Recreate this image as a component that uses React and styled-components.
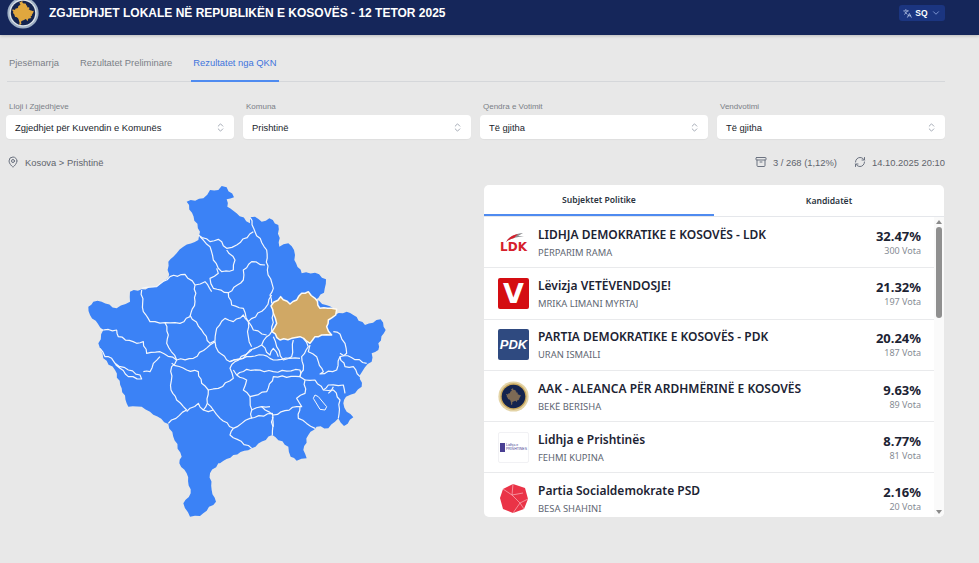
import styled, { createGlobalStyle } from "styled-components";
import { Archive, ChevronDown, ChevronsUpDown, Languages, MapPin, RefreshCw } from "lucide-react";

const GlobalStyle = createGlobalStyle`
    html, body {
        margin: 0;
        padding: 0;
        height: 100%;
        background-color: #e8e8e8;
        font-family: 'Liberation Sans', Arial, sans-serif;
        overflow: hidden;
    }
    * {
        box-sizing: border-box;
    }
`;

const filters = [
    { label: 'Lloji i Zgjedhjeve', value: 'Zgjedhjet për Kuvendin e Komunës' },
    { label: 'Komuna', value: 'Prishtinë' },
    { label: 'Qendra e Votimit', value: 'Të gjitha' },
    { label: 'Vendvotimi', value: 'Të gjitha' },
];

const results = [
    { logo: 'ldk', name: 'LIDHJA DEMOKRATIKE E KOSOVËS - LDK', person: 'PËRPARIM RAMA', pct: '32.47%', votes: '300 Vota' },
    { logo: 'vv', name: 'Lëvizja VETËVENDOSJE!', person: 'MRIKA LIMANI MYRTAJ', pct: '21.32%', votes: '197 Vota' },
    { logo: 'pdk', name: 'PARTIA DEMOKRATIKE E KOSOVËS - PDK', person: 'URAN ISMAILI', pct: '20.24%', votes: '187 Vota' },
    { logo: 'aak', name: 'AAK - ALEANCA PËR ARDHMËRINË E KOSOVËS', person: 'BEKË BERISHA', pct: '9.63%', votes: '89 Vota' },
    { logo: 'lp', name: 'Lidhja e Prishtinës', person: 'FEHMI KUPINA', pct: '8.77%', votes: '81 Vota' },
    { logo: 'psd', name: 'Partia Socialdemokrate PSD', person: 'BESA SHAHINI', pct: '2.16%', votes: '20 Vota' },
];

const kosovoOutline = '455,18 470,22 492,52 470,58 472,80 490,92 540,130 540,112 555,110 575,125 598,115 625,135 628,200 655,190 672,210 673,240 695,280 735,278 768,298 762,338 735,360 790,385 800,390 795,405 830,395 850,405 885,435 932,418 947,450 925,490 925,510 905,520 905,545 893,552 870,585 875,620 855,640 828,650 820,670 830,695 850,712 822,738 805,715 775,745 740,740 715,765 700,810 710,835 680,842 662,830 655,800 607,765 545,805 490,825 450,850 445,850 420,880 425,930 438,965 390,1008 360,1010 340,970 362,940 350,880 328,850 335,830 295,732 240,695 215,680 175,680 155,625 135,570 100,535 90,505 85,490 100,450 60,405 55,380 70,365 95,365 140,385 180,365 180,335 215,328 260,320 295,295 295,245 310,230 340,200 385,180 390,155 350,65 400,55 420,30 445,30 455,18';

const pristinaOutline = '603,378 632,350 660,372 680,360 695,340 715,335 735,355 750,385 785,385 800,388 797,405 775,420 770,440 785,465 755,465 735,470 720,490 690,470 665,475 630,480 606,455 620,430 610,400 603,378';

const lakeOutline = '735,645 745,650 770,680 765,690 750,688 730,655 735,645';

const borders = [
    '385,165 420,185 445,178 470,205 500,195 550,155',
    '540,112 555,155 590,210 592,270 610,325 600,345 605,370',
    '390,170 420,200 430,240 455,275 490,270 495,240 470,210',
    '440,265 445,280 420,295 430,325 475,338 520,300 520,270 545,245 585,255',
    '215,325 260,320 300,290 345,283 375,315 375,365 360,410 330,430 285,428 240,425 220,395 215,330',
    '375,315 405,305 425,335',
    '475,338 485,375 520,385 535,425 585,385 605,345',
    '360,405 395,450 420,490 435,482 440,445 465,415 490,425 520,405 535,425 535,470 545,500',
    '285,428 295,465 290,490 320,540 370,535 420,495 435,485 445,515 480,545 520,535 540,510 575,495 590,470 605,455 610,400',
    '535,425 550,450 590,465',
    '90,450 140,450 145,470 200,490 220,485 230,520 270,515 320,540',
    '90,505 105,530 125,535 135,550 175,570 210,585 215,597 175,590 150,565 135,552',
    '220,575 240,575 250,550 270,530',
    '320,540 305,560 303,630 320,660 350,690 295,730',
    '305,550 350,570 385,575 395,610 415,630 445,625 490,595 480,565 495,545 545,510',
    '415,630 412,670 400,690 385,670 350,695',
    '412,670 430,690 415,695 400,690',
    '430,690 450,715 490,745 480,765 545,805',
    '490,745 540,715 607,700 607,765',
    '490,570 500,585 530,600 520,630 540,650 590,635 610,590 690,590 690,570 610,575 530,568 500,585',
    '540,650 545,715',
    '600,680 575,680 545,690',
    '575,680 610,705 680,680 695,680 680,655 705,640 705,600 690,590',
    '690,680 685,715 735,745',
    '705,600 735,600 760,630 790,630 810,660 805,715',
    '610,740 607,710',
    '610,470 620,500 640,540 665,530 670,480',
    '700,475 715,500 695,530 700,570 690,590',
    '575,495 600,525 610,505 625,530',
    '480,545 530,530 580,525 610,540 660,535 690,535',
    '720,495 715,515 740,530 745,545 760,575 750,582 800,570 810,530 830,520 825,490 810,462 790,455',
    '810,530 825,560 850,560 870,590',
    '810,520 890,550',
    '760,630 775,615 820,615 825,640',
    '790,620 775,640',
];

// the traced borders are too straight, this breaks each segment into small irregular steps
function roughen(points, amount = 2.6, step = 13) {
    const list = points.split(' ').map((p) => p.split(',').map(Number));
    const out = [list[0]];
    for (let i = 1; i < list.length; i++) {
        const [x0, y0] = list[i - 1];
        const [x1, y1] = list[i];
        const len = Math.hypot(x1 - x0, y1 - y0);
        const count = Math.max(1, Math.round(len / step));
        for (let k = 1; k < count; k++) {
            const t = k / count;
            const off = Math.sin(x0 * 0.7 + y0 * 1.3 + k * 2.4) * amount;
            out.push([x0 + (x1 - x0) * t - ((y1 - y0) / len) * off, y0 + (y1 - y0) * t + ((x1 - x0) / len) * off]);
        }
        out.push([x1, y1]);
    }
    return out.map((p) => p[0].toFixed(1) + ',' + p[1].toFixed(1)).join(' ');
}

function KosovoMap() {
    return (
        <MapSvg viewBox='0 15 990 1020'>
            <polygon points={roughen(kosovoOutline)} fill='#3b82f6' />
            {borders.map((points) => (
                <polyline key={points} points={roughen(points)} fill='none' stroke='#f4f7fc' strokeWidth='3.6' strokeLinejoin='round' />
            ))}
            <polygon points={lakeOutline} fill='#3b82f6' stroke='#f4f7fc' strokeWidth='3' />
            <polygon points={roughen(pristinaOutline)} fill='#d0a865' stroke='#fdfaf4' strokeWidth='4.5' strokeLinejoin='round' />
        </MapSvg>
    );
}

function Seal({ size, ring, edge, map, mapScale }) {
    // centre of the outline is about 501,514 in map units
    const dx = 16 - 501 * mapScale;
    const dy = 16 - 514 * mapScale;
    return (
        <svg width={size} height={size} viewBox='0 0 32 32'>
            <circle cx='16' cy='16' r='15.6' fill={ring} />
            <circle cx='16' cy='16' r='13.6' fill={edge} />
            <circle cx='16' cy='16' r='12.2' fill='#14244f' />
            <polygon points={kosovoOutline} fill={map} transform={`translate(${dx} ${dy}) scale(${mapScale})`} />
        </svg>
    );
}

function PartyLogo({ type }) {
    if (type === 'ldk') {
        return (
            <LogoBox>
                <svg width='22' height='10' viewBox='0 0 22 10'>
                    <path d='M3 10 C6 5 11 2 20 1 L15 4 L21 4 C15 5 8 6 3 10 Z' fill='#8d8f92' />
                    <path d='M3 10 C6 5 10 3 15 2 L11 6 C8 7 5 8 3 10 Z' fill='#d6202c' />
                </svg>
                <LdkText>LDK</LdkText>
            </LogoBox>
        );
    }
    if (type === 'vv') {
        return <SquareLogo $bg='#d40d12'><VvText>V</VvText></SquareLogo>;
    }
    if (type === 'pdk') {
        return <SquareLogo $bg='#2f4a80'><PdkText>PDK</PdkText></SquareLogo>;
    }
    if (type === 'aak') {
        return <LogoBox><Seal size={31} ring='#e3d3a6' edge='#c9a75c' map='#7d6a55' mapScale={0.017} /></LogoBox>;
    }
    if (type === 'lp') {
        return (
            <FramedLogo>
                <LpMark />
                <LpText>Lidhja e<br />PRISHTINËS</LpText>
            </FramedLogo>
        );
    }
    return (
        <LogoBox>
            <svg width='30' height='31' viewBox='0 0 30 31'>
                <path d='M14 1 L26 5 L29 16 L25 26 L14 30 L4 26 L1 15 L4 6 Z' fill='#ea3347' />
                <path d='M14 1 L13 12 L4 6 M13 12 L21 20 L25 26 M13 12 L24 10 M21 20 L14 30 M21 20 L29 16' fill='none' stroke='#f8b5bd' strokeWidth='0.7' />
            </svg>
        </LogoBox>
    );
}

export default function App() {
    return (
        <>
            <GlobalStyle />
            <Header>
                <Brand>
                    <HeaderLogo>
                        <Seal size={32} ring='#9fb0c4' edge='#dfe5ea' map='#e0a73e' mapScale={0.024} />
                    </HeaderLogo>
                    <Title>ZGJEDHJET LOKALE NË REPUBLIKËN E KOSOVËS - 12 TETOR 2025</Title>
                </Brand>
                <LangButton>
                    <Languages size={9} color='#c3d0ee' />
                    SQ
                    <ChevronDown size={10} color='#8fa6de' />
                </LangButton>
            </Header>

            <Page>
                <Tabs>
                    <Tab>Pjesëmarrja</Tab>
                    <Tab>Rezultatet Preliminare</Tab>
                    <Tab $active>Rezultatet nga QKN</Tab>
                </Tabs>

                <Filters>
                    {filters.map((filter) => (
                        <Filter key={filter.label}>
                            <FilterLabel>{filter.label}</FilterLabel>
                            <Select>
                                {filter.value}
                                <ChevronsUpDown size={11} color='#9ca3af' />
                            </Select>
                        </Filter>
                    ))}
                </Filters>

                <InfoBar>
                    <InfoItem>
                        <MapPin size={12} color='#6b7280' />
                        Kosova &gt; Prishtinë
                    </InfoItem>
                    <InfoGroup>
                        <InfoItem>
                            <Archive size={12} color='#6b7280' />
                            3 / 268 (1,12%)
                        </InfoItem>
                        <InfoItem>
                            <RefreshCw size={12} color='#6b7280' />
                            14.10.2025 20:10
                        </InfoItem>
                    </InfoGroup>
                </InfoBar>

                <Content>
                    <MapColumn>
                        <KosovoMap />
                    </MapColumn>
                    <Card>
                        <CardTabs>
                            <CardTab $active>Subjektet Politike</CardTab>
                            <CardTab>Kandidatët</CardTab>
                        </CardTabs>
                        <CardBody>
                            <List>
                                {results.map((row) => (
                                    <Row key={row.name}>
                                        <PartyLogo type={row.logo} />
                                        <RowText>
                                            <RowName>{row.name}</RowName>
                                            <RowPerson>{row.person}</RowPerson>
                                        </RowText>
                                        <RowNumbers>
                                            <Percent>{row.pct}</Percent>
                                            <Votes>{row.votes}</Votes>
                                        </RowNumbers>
                                    </Row>
                                ))}
                            </List>
                            <Scrollbar>
                                <ArrowUp />
                                <ThumbTrack>
                                    <Thumb />
                                </ThumbTrack>
                                <ArrowDown />
                            </Scrollbar>
                        </CardBody>
                    </Card>
                </Content>
            </Page>
        </>
    );
}

const Header = styled.header`
    height: 35px;
    padding: 0 34px 9px 7px;
    display: flex;
    align-items: center;
    justify-content: space-between;
    background-color: #15265a;
    box-shadow: 0 1px 3px rgba(0, 0, 0, 0.2);
    overflow: hidden;
`;

const Brand = styled.div`
    display: flex;
    align-items: center;
    gap: 10px;
`;

const HeaderLogo = styled.div`
    display: flex;
    width: 32px;
    height: 32px;
`;

const Title = styled.h1`
    margin: 0;
    font-size: 12px;
    font-weight: 700;
    color: #ffffff;
    white-space: nowrap;
`;

const LangButton = styled.div`
    width: 46px;
    height: 16px;
    display: flex;
    align-items: center;
    justify-content: center;
    gap: 3px;
    border-radius: 3px;
    background-color: #1b3580;
    color: #ffffff;
    font-size: 8.5px;
    font-weight: 700;
`;

const Page = styled.main`
    padding: 0 34px 0 6px;
`;

const Tabs = styled.nav`
    height: 47px;
    margin-left: 1px;
    padding-top: 19px;
    display: flex;
    gap: 17px;
    border-bottom: 1px solid #d5d7da;
`;

const Tab = styled.div`
    height: 28px;
    padding: 0 2px;
    font-size: 9.4px;
    line-height: 17px;
    color: ${(props) => (props.$active ? '#3f74dd' : '#7b8087')};
    border-bottom: ${(props) => (props.$active ? '2px solid #4f8bf0' : 'none')};
`;

const Filters = styled.section`
    margin-top: 20px;
    display: grid;
    grid-template-columns: repeat(4, 228px);
    column-gap: 9px;
`;

const Filter = styled.div`
    display: flex;
    flex-direction: column;
`;

const FilterLabel = styled.label`
    height: 13px;
    padding-left: 3px;
    font-size: 8px;
    line-height: 10px;
    color: #7b8087;
`;

const Select = styled.div`
    height: 24px;
    padding: 0 8px 0 9px;
    display: flex;
    align-items: center;
    justify-content: space-between;
    border-radius: 4px;
    background-color: #ffffff;
    box-shadow: 0 1px 1px rgba(0, 0, 0, 0.04);
    font-size: 9.4px;
    color: #20242b;
`;

const InfoBar = styled.section`
    height: 16px;
    margin-top: 15px;
    padding-left: 1px;
    display: flex;
    align-items: center;
    justify-content: space-between;
`;

const InfoGroup = styled.div`
    display: flex;
    gap: 17px;
`;

const InfoItem = styled.div`
    display: flex;
    align-items: center;
    gap: 6px;
    font-size: 9.4px;
    color: #5f646c;
`;

const Content = styled.section`
    margin-top: 15px;
    display: grid;
    grid-template-columns: 478px 460px;
`;

const MapColumn = styled.div`
    padding-left: 64px;
`;

const MapSvg = styled.svg`
    display: block;
    width: 330px;
    height: 340px;
`;

const Card = styled.article`
    height: 332px;
    display: flex;
    flex-direction: column;
    border-radius: 5px;
    background-color: #ffffff;
    overflow: hidden;
    font-family: 'Noto Sans', sans-serif;
`;

const CardTabs = styled.div`
    height: 32px;
    display: flex;
    flex-shrink: 0;
    border-bottom: 1px solid #e5e7eb;
`;

const CardTab = styled.div`
    flex: 1;
    height: 31px;
    display: flex;
    align-items: center;
    justify-content: center;
    font-size: 8.6px;
    font-weight: 600;
    color: #2b3440;
    border-bottom: ${(props) => (props.$active ? '2px solid #4f8bf0' : 'none')};
`;

const CardBody = styled.div`
    flex: 1;
    min-height: 0;
    display: flex;
`;

const List = styled.div`
    flex: 1;
    min-width: 0;
    overflow: hidden;
`;

const Row = styled.div`
    height: 51.3px;
    padding: 0 13px 0 14px;
    display: flex;
    align-items: center;
    gap: 9px;
    border-bottom: 1px solid #e9eaec;
`;

const LogoBox = styled.div`
    width: 31px;
    height: 31px;
    flex-shrink: 0;
    display: flex;
    flex-direction: column;
    align-items: center;
    justify-content: center;
`;

const SquareLogo = styled(LogoBox)`
    border-radius: 2px;
    background-color: ${(props) => props.$bg};
`;

const FramedLogo = styled(LogoBox)`
    flex-direction: row;
    gap: 1px;
    border: 1px solid #f1f1f4;
    border-radius: 2px;
`;

const LdkText = styled.span`
    font-family: 'DejaVu Sans', sans-serif;
    font-size: 12px;
    font-weight: 700;
    line-height: 10px;
    color: #d6202c;
`;

const VvText = styled.span`
    font-family: 'DejaVu Sans', sans-serif;
    font-size: 27px;
    font-weight: 700;
    line-height: 31px;
    color: #ffffff;
`;

const PdkText = styled.span`
    font-family: 'Liberation Sans', sans-serif;
    font-size: 13px;
    font-weight: 700;
    font-style: italic;
    color: #ffffff;
`;

const LpMark = styled.span`
    width: 5px;
    height: 9px;
    background-color: #4a3f93;
`;

const LpText = styled.span`
    font-family: 'Liberation Sans', sans-serif;
    font-size: 3.5px;
    line-height: 4px;
    color: #4a3f93;
    white-space: nowrap;
`;

const RowText = styled.div`
    flex: 1;
    min-width: 0;
    padding-top: 1px;
    display: flex;
    flex-direction: column;
    gap: 3px;
`;

const RowName = styled.div`
    font-size: 12px;
    font-weight: 600;
    line-height: 16px;
    color: #1c2333;
    white-space: nowrap;
`;

const RowPerson = styled.div`
    font-size: 9.4px;
    line-height: 13px;
    color: #5f6773;
`;

const RowNumbers = styled.div`
    display: flex;
    flex-direction: column;
    align-items: flex-end;
`;

const Percent = styled.div`
    font-size: 13px;
    font-weight: 700;
    line-height: 17px;
    color: #1c2333;
`;

const Votes = styled.div`
    font-size: 9px;
    line-height: 12px;
    color: #878c94;
`;

const Scrollbar = styled.div`
    width: 10px;
    flex-shrink: 0;
    padding: 3px 1px;
    display: flex;
    flex-direction: column;
    align-items: center;
    gap: 3px;
    background-color: #fafafa;
`;

const ArrowUp = styled.span`
    width: 0;
    height: 0;
    border-left: 3px solid transparent;
    border-right: 3px solid transparent;
    border-bottom: 4px solid #8a8a8a;
`;

const ArrowDown = styled.span`
    width: 0;
    height: 0;
    border-left: 3px solid transparent;
    border-right: 3px solid transparent;
    border-top: 4px solid #8a8a8a;
`;

const ThumbTrack = styled.div`
    flex: 1;
    width: 100%;
`;

const Thumb = styled.div`
    width: 6px;
    height: 91px;
    margin: 0 auto;
    border-radius: 3px;
    background-color: #8f8f8f;
`;
